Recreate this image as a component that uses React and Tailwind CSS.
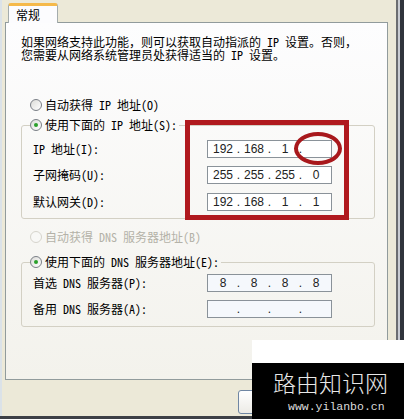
import React from 'react';

const CJK = { fontFamily: '"Noto Sans Mono CJK SC", "Noto Sans CJK SC", monospace' };

const Radio = ({ checked, disabled }) => (
  <span
    className={
      'w-[12px] h-[12px] rounded-full border flex items-center justify-center shrink-0 ' +
      (disabled ? 'border-[#d6d4cc] bg-[#f8f8f6]' : 'border-[#7a7f86] bg-gradient-to-br from-[#dcdcd8] to-white')
    }
  >
    {checked && <span className="w-[4px] h-[4px] rounded-full bg-[#2aa02a]" />}
  </span>
);

const RadioRow = ({ label, checked, disabled }) => (
  <div className={'flex items-center gap-[3px] h-[14px] ' + (disabled ? 'text-[#b4b2a8]' : 'text-black')}>
    <Radio checked={checked} disabled={disabled} />
    <span className="text-[12px] leading-[14px] whitespace-pre">{label}</span>
  </div>
);

const IpBox = ({ values, tint }) => (
  <div
    className={
      'w-[125px] h-[18px] border border-[#8a9299] flex items-center pl-[3px] text-[12px] text-[#222] ' +
      (tint ? 'bg-[#f5f8fc]' : 'bg-white')
    }
    style={{ fontFamily: '"Liberation Sans", Arial, sans-serif' }}
  >
    {values.map((v, i) => (
      <React.Fragment key={i}>
        <span className="w-[24px] text-center leading-[16px]">{v}</span>
        {i < 3 && <span className="w-[7px] text-center leading-[16px]">.</span>}
      </React.Fragment>
    ))}
  </div>
);

const FieldRow = ({ label, values, tint, className = '' }) => (
  <div className={'flex items-center h-[18px] ' + className}>
    <span className="w-[174px] text-[12px] leading-[14px] whitespace-pre">{label}</span>
    <IpBox values={values} tint={tint} />
  </div>
);

export default function App() {
  return (
    <div className="relative w-[404px] h-[419px] overflow-hidden bg-[#ece9d8] flex flex-col" style={CJK}>
      <div className="flex h-[416px]">
        {/* main dialog column */}
        <div className="w-[396px] flex flex-col pl-[5px] border-l-[2px] border-[#dbe2e8]">
          <div className="h-[22px] flex items-end pl-[1px]">
            <div className="relative z-10 -mb-px h-[20px] w-[50px] bg-[#fcfcfe] border-x border-[#a4acad] rounded-t-[3px] border-t-[3px] border-t-[#f5b94a] flex items-center pl-[7px] text-[12px] leading-[14px]">
              常规
            </div>
          </div>

          <div className="ml-[-2px] w-[383px] h-[358px] border border-[#919b9c] bg-gradient-to-b from-[#fdfdfe] to-[#f3f2ec]">
            <p className="pl-[15px] pt-[12px] text-[12px] leading-[13px] whitespace-pre text-black">
              {'如果网络支持此功能，则可以获取自动指派的 IP 设置。否则，\n您需要从网络系统管理员处获得适当的 IP 设置。'}
            </p>

            <div className="pl-[24px] mt-[37px]">
              <RadioRow label="自动获得 IP 地址(O)" />
            </div>

            <fieldset className="ml-[15px] mt-[6px] w-[354px] border border-[#d3d0c4] rounded-[3px] pl-[11px] pt-[8px] pb-[7px]">
              <legend className="ml-[-3px] pr-[2px]">
                <RadioRow label="使用下面的 IP 地址(S):" checked />
              </legend>
              <FieldRow label="IP 地址(I):" values={['192', '168', '1', '']} />
              <FieldRow className="mt-[8px]" label="子网掩码(U):" values={['255', '255', '255', '0']} />
              <FieldRow className="mt-[9px]" label="默认网关(D):" values={['192', '168', '1', '1']} />
            </fieldset>

            <div className="pl-[24px] mt-[11px]">
              <RadioRow label="自动获得 DNS 服务器地址(B)" disabled />
            </div>

            <fieldset className="ml-[15px] mt-[11px] w-[354px] border border-[#d3d0c4] rounded-[3px] pl-[11px] pt-[5px] pb-[8px]">
              <legend className="ml-[-3px] pr-[2px]">
                <RadioRow label="使用下面的 DNS 服务器地址(E):" checked />
              </legend>
              <FieldRow label="首选 DNS 服务器(P):" values={['8', '8', '8', '8']} tint />
              <FieldRow className="mt-[8px]" label="备用 DNS 服务器(A):" values={['', '', '', '']} tint />
            </fieldset>
          </div>

          <div className="flex-1 pl-[231px] pt-[10px]">
            <div className="w-[75px] h-[24px] rounded-[3px] border border-[#6f86a3] bg-gradient-to-b from-white to-[#ecebe6]" />
          </div>
        </div>

        {/* window right frame */}
        <div className="w-[8px] flex">
          <div className="w-[2px] bg-[#6b6d70]" />
          <div className="w-[2px] bg-[#c9ccd2]" />
          <div className="w-[4px] bg-[#30343c]" />
        </div>
      </div>
      <div className="h-[3px] bg-[#3d4046]" />

      {/* red highlight marks drawn over the screenshot */}
      <div className="absolute left-[185px] top-[120px] w-[164px] h-[100px] border-[5px] border-[#b0191e]" />
      <div className="absolute left-[294px] top-[132px] w-[48px] h-[33px] rounded-[50%] border-[4px] border-[#a8181c]" />

      {/* watermark */}
      <div className="absolute left-[252px] top-[340px] w-[152px] h-[79px] flex flex-col">
        <div className="h-[23px] bg-white" />
        <div className="flex-1 bg-black pl-[21px] pt-[8px]">
          <div
            className="text-[23px] leading-[23px] text-[#e8e8e8]"
            style={{ fontFamily: '"Noto Sans CJK SC", sans-serif', fontWeight: 300 }}
          >
            路由知识网
          </div>
          <div
            className="mt-[7px] pl-[15px] text-[11.5px] leading-[12px] text-[#dcdcdc]"
            style={{ fontFamily: '"Liberation Mono", monospace' }}
          >
            www.yilanbo.cn
          </div>
        </div>
      </div>
    </div>
  );
}
